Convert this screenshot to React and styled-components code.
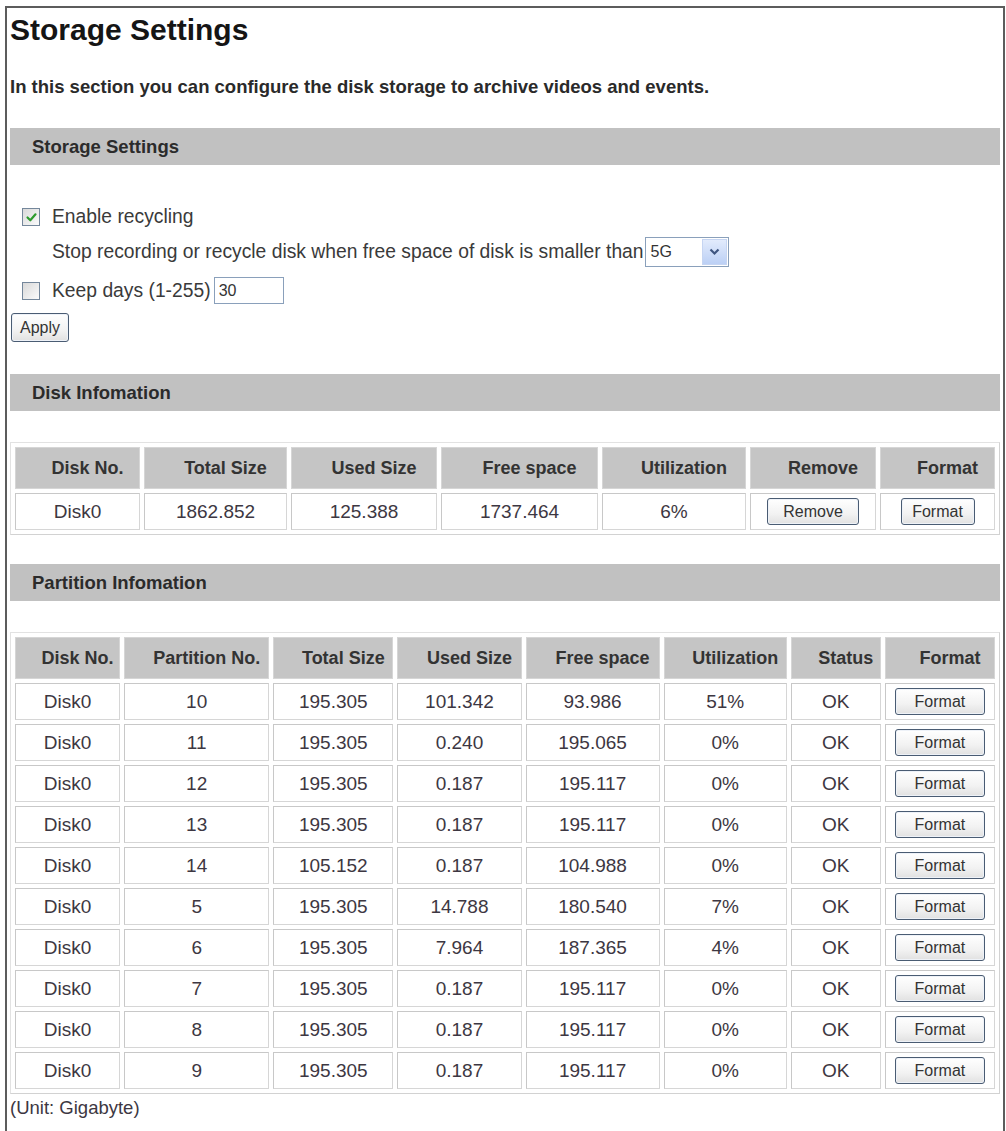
import React from "react";
import styled, { createGlobalStyle } from "styled-components";

const GlobalStyle = createGlobalStyle`
  * { box-sizing: border-box; }
  body {
    margin: 0;
    background: #fff;
    color: #333;
    font-family: "Liberation Sans", Arial, sans-serif;
  }
`;

const Frame = styled.div`
  margin: 6px 0 0 5px;
  width: 1000px;
  min-height: calc(100vh - 6px);
  border: 2px solid #5c5c5c;
  border-bottom: none;
  padding: 0 3px;
`;

const Title = styled.h1`
  margin: 4px 0 0;
  font-size: 30px;
  line-height: 36px;
  font-weight: bold;
  color: #151515;
`;

const Intro = styled.p`
  margin: 28px 0 0;
  font-size: 18.5px;
  line-height: 22px;
  font-weight: bold;
  color: #2a2a2a;
`;

const SectionBar = styled.div`
  margin-top: ${p => p.$top}px;
  height: 37px;
  background: #c1c1c1;
  padding-left: 22px;
  display: flex;
  align-items: center;
  font-size: 18.5px;
  font-weight: bold;
  color: #2b2b2b;
`;

const FormRow = styled.div`
  margin-top: ${p => p.$top}px;
  padding-left: ${p => p.$indent}px;
  height: ${p => p.$h}px;
  display: flex;
  align-items: center;
  font-size: 19.3px;
  color: #3a3a3a;
`;

const Box = styled.span`
  width: 18px;
  height: 18px;
  margin-right: 12px;
  border: 1px solid #74879b;
  background: linear-gradient(135deg, #d9d9d9, #fbfbfb);
  display: inline-flex;
  align-items: center;
  justify-content: center;
`;

const Check = ({ checked }) => (
  <Box>
    {checked && (
      <svg width="13" height="13" viewBox="0 0 13 13">
        <path d="M2.5 6.5 L5.3 9.3 L10.5 3.3" fill="none" stroke="#2d9b2d" strokeWidth="2.2" strokeLinecap="round" strokeLinejoin="round" />
      </svg>
    )}
  </Box>
);

const Select = styled.div`
  margin-left: 1px;
  width: 84px;
  height: 30px;
  border: 1px solid #8aa0bb;
  display: flex;
  align-items: center;
  justify-content: space-between;
  padding: 1px 1px 1px 5px;
  font-size: 16px;
  color: #333;
`;

const SelectArrow = styled.span`
  width: 25px;
  height: 100%;
  background: linear-gradient(#e2ebfc, #bcd0f5);
  border: 1px solid #c6d5f2;
  display: flex;
  align-items: center;
  justify-content: center;
`;

const TextInput = styled.div`
  margin-left: 3px;
  width: 70px;
  height: 27px;
  border: 1px solid #8aa0bb;
  padding-left: 4px;
  display: flex;
  align-items: center;
  font-size: 16px;
  color: #333;
`;

const Button = styled.button`
  font-family: "Liberation Sans", Arial, sans-serif;
  font-size: ${p => p.$fs || 16}px;
  color: #333;
  height: ${p => p.$h || 27}px;
  width: ${p => (p.$w ? `${p.$w}px` : "auto")};
  padding: 0 ${p => p.$pad ?? 0}px;
  border: 1px solid #4a5c73;
  border-radius: 3px;
  background: linear-gradient(#ffffff, #f2f2f2 60%, #e1e1e1);
  box-shadow: inset 0 0 0 1px #eef2f8;
  display: inline-flex;
  align-items: center;
  justify-content: center;
`;

const ApplyRow = styled.div`
  margin-top: 9px;
  padding-left: 1px;
`;

const Table = styled.table`
  margin-top: 31px;
  width: 990px;
  table-layout: fixed;
  border-collapse: separate;
  border-spacing: 4px;
  border: 1px solid #d2d2d2;
  border-left-color: #e2e2e2;
  border-top-color: #e2e2e2;
`;

const Col = styled.col`
  width: ${p => p.$w}px;
`;

const Th = styled.th`
  height: 42px;
  padding: 0 0 0 20px;
  background: #c5c5c5;
  border: 1px solid #d6d6d6;
  font-size: 18px;
  font-weight: bold;
  color: #333;
  text-align: center;
  white-space: nowrap;
`;

const Td = styled.td`
  height: 37px;
  padding: 0;
  border: 1px solid #d6d6d6;
  border-top-color: #c8c8c8;
  border-left-color: #c8c8c8;
  font-size: 19px;
  color: #3d3742;
  text-align: center;
  white-space: nowrap;
`;

const Unit = styled.div`
  margin-top: 3px;
  font-size: 18.5px;
  line-height: 22px;
  color: #3d3742;
`;

const diskCols = [125, 143, 146, 157, 144, 126, 115];
const diskHead = ["Disk No.", "Total Size", "Used Size", "Free space", "Utilization", "Remove", "Format"];

const partCols = [105, 145, 120, 124, 134, 123, 90, 110];
const partHead = ["Disk No.", "Partition No.", "Total Size", "Used Size", "Free space", "Utilization", "Status", "Format"];

const partitions = [
  ["10", "195.305", "101.342", "93.986", "51%"],
  ["11", "195.305", "0.240", "195.065", "0%"],
  ["12", "195.305", "0.187", "195.117", "0%"],
  ["13", "195.305", "0.187", "195.117", "0%"],
  ["14", "105.152", "0.187", "104.988", "0%"],
  ["5", "195.305", "14.788", "180.540", "7%"],
  ["6", "195.305", "7.964", "187.365", "4%"],
  ["7", "195.305", "0.187", "195.117", "0%"],
  ["8", "195.305", "0.187", "195.117", "0%"],
  ["9", "195.305", "0.187", "195.117", "0%"],
];

export default function App() {
  return (
    <>
      <GlobalStyle />
      <Frame>
        <Title>Storage Settings</Title>
        <Intro>In this section you can configure the disk storage to archive videos and events.</Intro>

        <SectionBar $top={30}>Storage Settings</SectionBar>
        <FormRow $top={40} $indent={12} $h={24}>
          <Check checked />
          Enable recycling
        </FormRow>
        <FormRow $top={8} $indent={42} $h={30}>
          Stop recording or recycle disk when free space of disk is smaller than
          <Select>
            5G
            <SelectArrow>
              <svg width="11" height="8" viewBox="0 0 11 8">
                <path d="M1.5 1.5 L5.5 5.5 L9.5 1.5" fill="none" stroke="#3f5680" strokeWidth="2.2" />
              </svg>
            </SelectArrow>
          </Select>
        </FormRow>
        <FormRow $top={10} $indent={12} $h={27}>
          <Check />
          Keep days (1-255)
          <TextInput>30</TextInput>
        </FormRow>
        <ApplyRow>
          <Button $h={29} $pad={8}>Apply</Button>
        </ApplyRow>

        <SectionBar $top={32}>Disk Infomation</SectionBar>
        <Table>
          <colgroup>
            {diskCols.map((w, i) => <Col key={i} $w={w} />)}
          </colgroup>
          <thead>
            <tr>{diskHead.map(h => <Th key={h}>{h}</Th>)}</tr>
          </thead>
          <tbody>
            <tr>
              <Td>Disk0</Td>
              <Td>1862.852</Td>
              <Td>125.388</Td>
              <Td>1737.464</Td>
              <Td>6%</Td>
              <Td><Button $w={92}>Remove</Button></Td>
              <Td><Button $w={74}>Format</Button></Td>
            </tr>
          </tbody>
        </Table>

        <SectionBar $top={29}>Partition Infomation</SectionBar>
        <Table>
          <colgroup>
            {partCols.map((w, i) => <Col key={i} $w={w} />)}
          </colgroup>
          <thead>
            <tr>{partHead.map(h => <Th key={h}>{h}</Th>)}</tr>
          </thead>
          <tbody>
            {partitions.map(row => (
              <tr key={row[0]}>
                <Td>Disk0</Td>
                {row.map((v, i) => <Td key={i}>{v}</Td>)}
                <Td>OK</Td>
                <Td><Button $w={90}>Format</Button></Td>
              </tr>
            ))}
          </tbody>
        </Table>
        <Unit>(Unit: Gigabyte)</Unit>
      </Frame>
    </>
  );
}
